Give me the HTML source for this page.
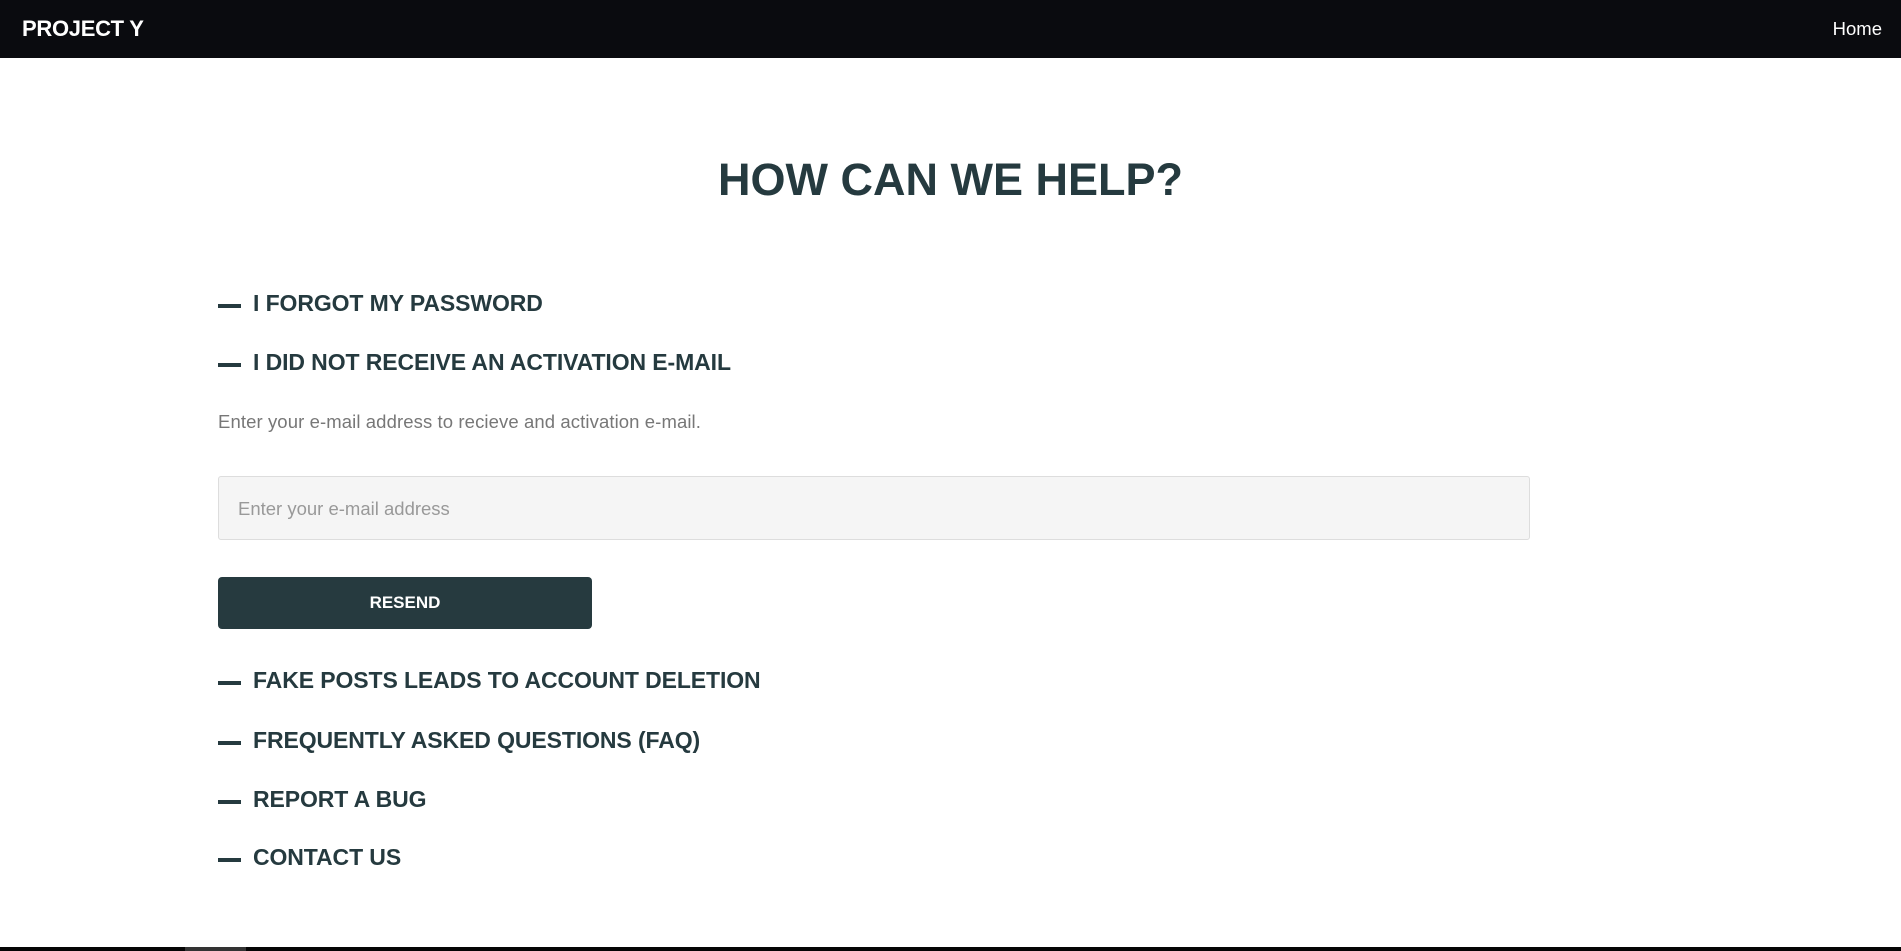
<!DOCTYPE html>
<html><head><style>
*{margin:0;padding:0;box-sizing:border-box}
body{width:1901px;height:951px;background:#fff;font-family:"Liberation Sans",sans-serif;position:relative;overflow:hidden}
.nav{position:absolute;left:0;top:0;width:1901px;height:58px;background:#0a0b0f}
.logo{position:absolute;left:22px;top:16px;color:#fff;font-weight:bold;font-size:22px;line-height:26px;letter-spacing:-0.3px}
.home{position:absolute;right:19px;top:17px;color:#fff;font-size:18.5px;line-height:24px}
h1{position:absolute;left:0;width:1901px;top:152px;text-align:center;color:#253a3f;font-size:45px;line-height:56px;font-weight:bold;letter-spacing:0}
.item{position:absolute;left:218px;height:30px;line-height:30px;color:#253a3f;font-weight:bold;font-size:23px;letter-spacing:-0.1px}
.item:before{content:"";position:absolute;left:0;top:15px;width:23px;height:4px;background:#253a3f}
.item span{position:absolute;left:35px;top:-1px;white-space:nowrap}
.p{position:absolute;left:218px;top:411px;color:#777;font-size:18.5px;line-height:22px;letter-spacing:0.1px}
.inp{position:absolute;left:218px;top:476px;width:1312px;height:64px;background:#f5f5f5;border:1px solid #ddd;border-radius:3px;color:#999;font-size:18.5px;line-height:64px;padding-left:19px}
.btn{position:absolute;left:218px;top:577px;width:374px;height:52px;background:#263a3f;border-radius:4px;color:#fff;font-weight:bold;font-size:17px;line-height:52px;text-align:center}
.bar{position:absolute;left:0;top:947px;width:1901px;height:4px;background:#050505}
.bar i{position:absolute;left:185px;width:61px;height:4px;background:#333}
</style></head><body>
<div class="nav"><div class="logo">PROJECT Y</div><div class="home">Home</div></div>
<h1>HOW CAN WE HELP?</h1>
<div class="item" style="top:289px"><span>I FORGOT MY PASSWORD</span></div>
<div class="item" style="top:348px"><span>I DID NOT RECEIVE AN ACTIVATION E-MAIL</span></div>
<div class="p">Enter your e-mail address to recieve and activation e-mail.</div>
<div class="inp">Enter your e-mail address</div>
<div class="btn">RESEND</div>
<div class="item" style="top:666px"><span>FAKE POSTS LEADS TO ACCOUNT DELETION</span></div>
<div class="item" style="top:726px"><span>FREQUENTLY ASKED QUESTIONS (FAQ)</span></div>
<div class="item" style="top:785px"><span>REPORT A BUG</span></div>
<div class="item" style="top:843px"><span>CONTACT US</span></div>
<div class="bar"><i></i></div>
</body></html>
